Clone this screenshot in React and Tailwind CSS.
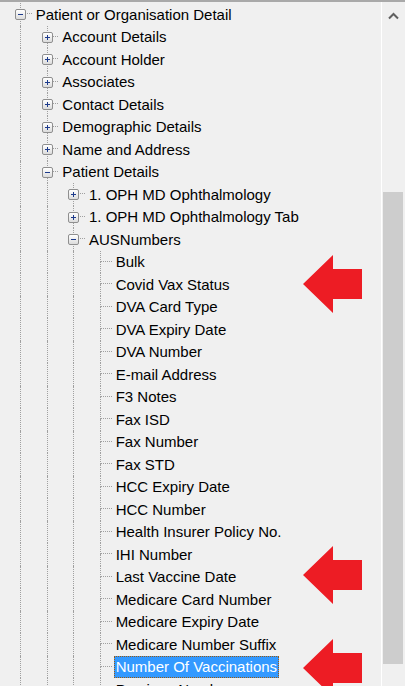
import React from "react";

const leaves = [
    "Bulk",
    "Covid Vax Status",
    "DVA Card Type",
    "DVA Expiry Date",
    "DVA Number",
    "E-mail Address",
    "F3 Notes",
    "Fax ISD",
    "Fax Number",
    "Fax STD",
    "HCC Expiry Date",
    "HCC Number",
    "Health Insurer Policy No.",
    "IHI Number",
    "Last Vaccine Date",
    "Medicare Card Number",
    "Medicare Expiry Date",
    "Medicare Number Suffix",
    "Number Of Vaccinations",
    "Previous Number",
];

// level, label, box ('+', '-' or null)
const rows = [
    { level: 0, label: "Patient or Organisation Detail", box: "-" },
    { level: 1, label: "Account Details", box: "+" },
    { level: 1, label: "Account Holder", box: "+" },
    { level: 1, label: "Associates", box: "+" },
    { level: 1, label: "Contact Details", box: "+" },
    { level: 1, label: "Demographic Details", box: "+" },
    { level: 1, label: "Name and Address", box: "+" },
    { level: 1, label: "Patient Details", box: "-" },
    { level: 2, label: "1. OPH MD Ophthalmology", box: "+" },
    { level: 2, label: "1. OPH MD Ophthalmology Tab", box: "+" },
    { level: 2, label: "AUSNumbers", box: "-" },
    ...leaves.map((l) => ({ level: 3, label: l, box: null })),
];

const Guide = () => (
    <div className="w-[26.67px] h-full shrink-0 flex">
        <div className="w-[14px] h-full border-r border-dotted border-[#a0a0a0]" />
    </div>
);

const Box = ({ sign }) => (
    <div className="absolute left-[8px] top-[6px] w-[11px] h-[11px] rounded-[2px] border border-[#8f8f8f] bg-gradient-to-b from-white to-[#dcdcdc] flex items-center justify-center">
        <div className="relative w-[5px] h-[5px]">
            <div className="absolute left-0 top-[2px] w-[5px] h-[1px] bg-[#1d3b8c]" />
            {sign === "+" && <div className="absolute left-[2px] top-0 w-[1px] h-[5px] bg-[#1d3b8c]" />}
        </div>
    </div>
);

const Connector = ({ box }) => (
    <div className="relative w-[26.67px] h-full shrink-0 grid grid-cols-[14px_1fr] grid-rows-2">
        <div className="border-r border-dotted border-[#a0a0a0]" />
        <div className="border-b border-dotted border-[#a0a0a0] mr-[2px]" />
        <div className="border-r border-dotted border-[#a0a0a0]" />
        <div />
        {box && <Box sign={box} />}
    </div>
);

const Arrow = ({ top }) => (
    <svg
        className="absolute left-[303px]"
        style={{ top }}
        width="60"
        height="59"
        viewBox="0 0 60 59"
    >
        <polygon points="0,29 30,0 30,14 59,14 59,44 30,44 30,58" fill="#ed1c24" />
    </svg>
);

export default function App() {
    return (
        <div
            className="relative w-[405px] h-[686px] overflow-hidden bg-[#f0f0f0] border-t-2 border-[#a9a9a9] flex"
            style={{ fontFamily: '"Liberation Sans", Arial, sans-serif' }}
        >
            <div className="w-[381px] h-full overflow-hidden pt-[1px] pl-[7px] flex flex-col">
                {rows.map((r, i) => {
                    const selected = r.label === "Number Of Vaccinations";
                    return (
                        <div key={i} className="h-[22.5px] shrink-0 flex items-stretch">
                            {Array.from({ length: r.level }).map((_, k) => (
                                <Guide key={k} />
                            ))}
                            <Connector box={r.box} />
                            <div className="flex items-center">
                                <span
                                    className={
                                        selected
                                            ? "h-[22px] flex items-center px-[1px] border border-dotted border-[#9a5a10] bg-[#3399ff] text-white text-[15px] leading-none whitespace-nowrap"
                                            : "h-[22px] flex items-center px-[2px] text-black text-[15px] leading-none whitespace-nowrap"
                                    }
                                >
                                    {r.label}
                                </span>
                            </div>
                        </div>
                    );
                })}
            </div>
            <div className="w-[24px] h-full border-l border-white bg-[#f0f0f0] flex flex-col">
                <div className="h-[28px] flex items-center justify-center">
                    <svg width="11" height="8" viewBox="0 0 11 8">
                        <polyline points="1,6.5 5.5,2 10,6.5" fill="none" stroke="#606060" strokeWidth="2" />
                    </svg>
                </div>
                <div className="h-[162px]" />
                <div className="h-[472px] ml-[1px] w-[20px] bg-[#cdcdcd]" />
            </div>
            <Arrow top={253} />
            <Arrow top={544} />
            <Arrow top={637} />
        </div>
    );
}
